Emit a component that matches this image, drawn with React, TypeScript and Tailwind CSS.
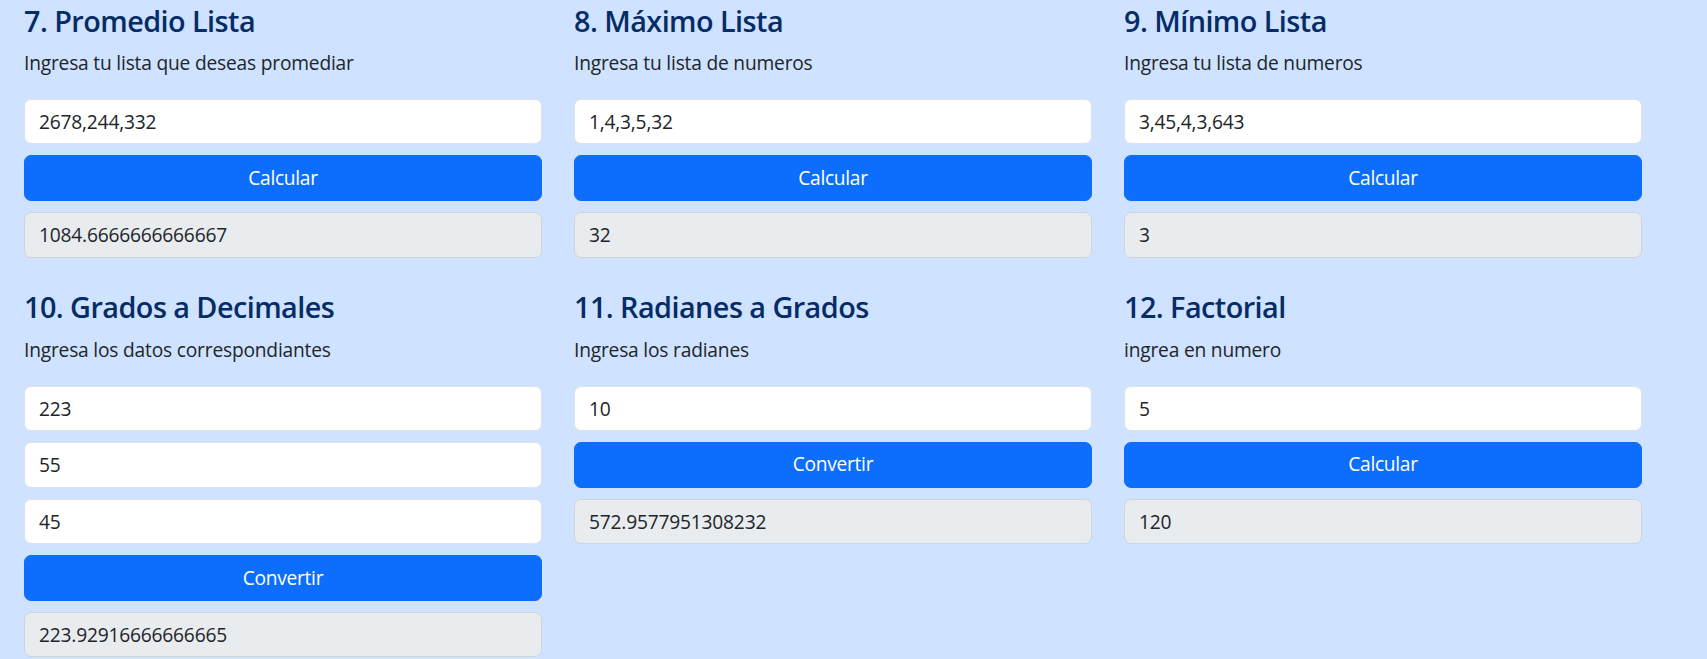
type Calc = {
  title: string;
  hint: string;
  inputs: string[];
  action: string;
  result: string;
};

const calcs: Calc[] = [
  {
    title: "7. Promedio Lista",
    hint: "Ingresa tu lista que deseas promediar",
    inputs: ["2678,244,332"],
    action: "Calcular",
    result: "1084.6666666666667",
  },
  {
    title: "8. Máximo Lista",
    hint: "Ingresa tu lista de numeros",
    inputs: ["1,4,3,5,32"],
    action: "Calcular",
    result: "32",
  },
  {
    title: "9. Mínimo Lista",
    hint: "Ingresa tu lista de numeros",
    inputs: ["3,45,4,3,643"],
    action: "Calcular",
    result: "3",
  },
  {
    title: "10. Grados a Decimales",
    hint: "Ingresa los datos correspondiantes",
    inputs: ["223", "55", "45"],
    action: "Convertir",
    result: "223.92916666666665",
  },
  {
    title: "11. Radianes a Grados",
    hint: "Ingresa los radianes",
    inputs: ["10"],
    action: "Convertir",
    result: "572.9577951308232",
  },
  {
    title: "12. Factorial",
    hint: "ingrea en numero",
    inputs: ["5"],
    action: "Calcular",
    result: "120",
  },
];

const CalcCard = ({ calc }: { calc: Calc }) => {
  return (
    <div>
      <h4 className="text-[28.8px] leading-[34.56px] font-semibold tracking-[-0.55px] text-[#052c65] mb-[11px]">
        {calc.title}
      </h4>
      <p className="text-[19.2px] leading-[28.8px] tracking-[-0.2px] text-[#212529] mb-[21px]">
        {calc.hint}
      </p>
      <div className="flex flex-col gap-[11px]">
        {calc.inputs.map((value, i) => (
          <input
            key={i}
            type="text"
            defaultValue={value}
            className="h-[45.6px] w-full rounded-[7px] border border-[#dee2e6] bg-white px-[14px] text-[19.2px] tracking-[-0.2px] text-[#212529] outline-none"
          />
        ))}
        <button className="h-[45.6px] w-full rounded-[7px] border border-[#0d6efd] bg-[#0d6efd] text-[19.2px] tracking-[-0.3px] text-white">
          {calc.action}
        </button>
        <div className="h-[45.6px] w-full rounded-[7px] border border-[#ced4da] bg-[#e9ecef] px-[14px] text-[19.2px] leading-[43.6px] tracking-[-0.2px] text-[#212529]">
          {calc.result}
        </div>
      </div>
    </div>
  );
};

export default function App() {
  return (
    <div className="min-h-screen bg-[#cfe2ff] font-['Open_Sans',sans-serif]">
      <div className="grid grid-cols-[518px_518px_518px] gap-x-[32px] gap-y-[32.5px] pl-[24px] pt-[3.5px]">
        {calcs.map((calc) => (
          <CalcCard key={calc.title} calc={calc} />
        ))}
      </div>
    </div>
  );
}
